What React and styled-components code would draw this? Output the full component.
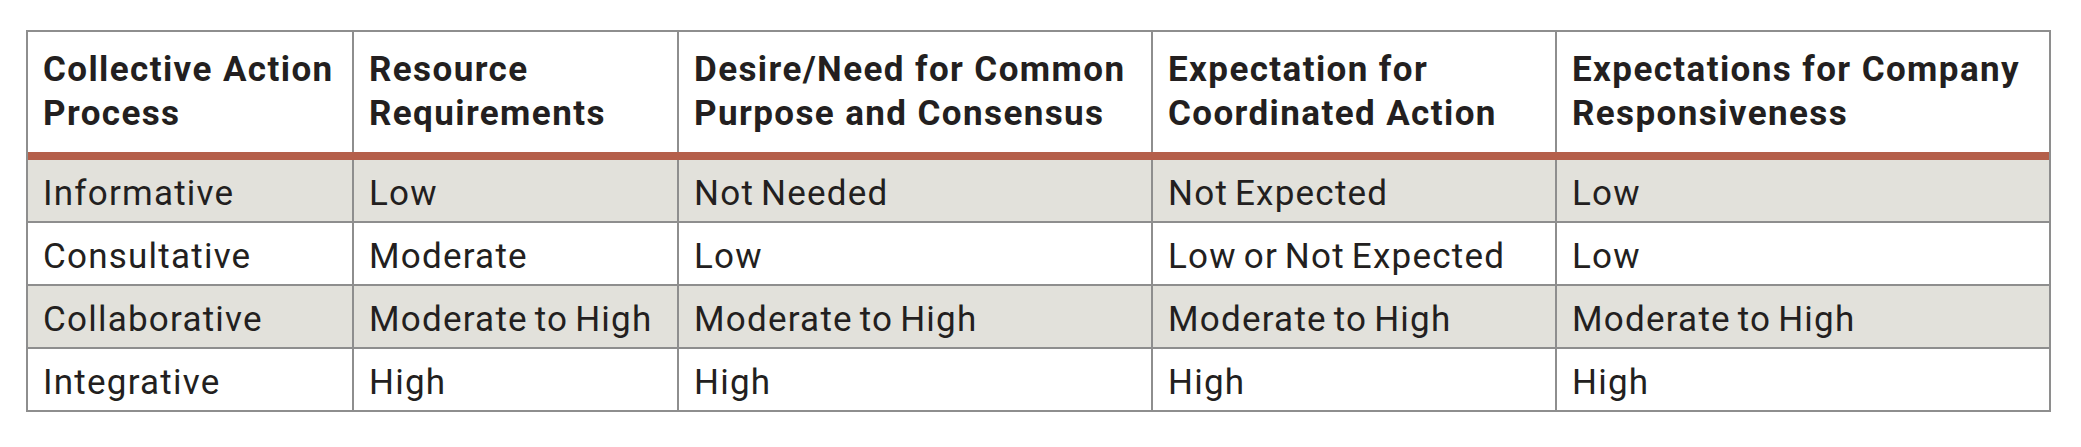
import React from 'react';
import styled, { createGlobalStyle } from 'styled-components';

const GlobalStyle = createGlobalStyle`
  html, body {
    margin: 0;
    padding: 0;
    background: #ffffff;
  }
  body {
    font-family: Roboto, "Liberation Sans", Arial, sans-serif;
    color: #231f20;
  }
`;

const Page = styled.div`
  padding: 30px 0 0 26px;
`;

const Table = styled.div`
  width: 2025px;
  border: 2px solid #8e8e8e;
  box-sizing: border-box;
`;

const Row = styled.div`
  display: grid;
  grid-template-columns: 326px 325px 474px 404px 492px;
  background: ${(p) => (p.$shade ? '#e2e1db' : '#ffffff')};
  border-bottom: ${(p) => (p.$head ? '8px solid #b45f4a' : '2px solid #8e8e8e')};

  &:last-child {
    border-bottom: none;
  }
`;

const Cell = styled.div`
  box-sizing: border-box;
  border-right: 2px solid #8e8e8e;
  padding: ${(p) => (p.$head ? '16px 15px' : '12px 15px 5px')};
  font-size: 35px;
  line-height: 44px;
  letter-spacing: ${(p) => (p.$head ? '0.04em' : '0.035em')};
  word-spacing: ${(p) => (p.$head ? '0' : '-3px')};
  font-weight: ${(p) => (p.$head ? 700 : 400)};
  white-space: nowrap;

  &:last-child {
    border-right: none;
  }
`;

const headers = [
  ['Collective Action', 'Process'],
  ['Resource', 'Requirements'],
  ['Desire/Need for Common', 'Purpose and Consensus'],
  ['Expectation for', 'Coordinated Action'],
  ['Expectations for Company', 'Responsiveness'],
];

const rows = [
  ['Informative', 'Low', 'Not Needed', 'Not Expected', 'Low'],
  ['Consultative', 'Moderate', 'Low', 'Low or Not Expected', 'Low'],
  ['Collaborative', 'Moderate to High', 'Moderate to High', 'Moderate to High', 'Moderate to High'],
  ['Integrative', 'High', 'High', 'High', 'High'],
];

export default function App() {
  return (
    <Page>
      <GlobalStyle />
      <Table>
        <Row $head>
          {headers.map((h) => (
            <Cell $head key={h[0]}>
              {h[0]}
              <br />
              {h[1]}
            </Cell>
          ))}
        </Row>
        {rows.map((r, i) => (
          <Row key={r[0]} $shade={i % 2 === 0}>
            {r.map((c, j) => (
              <Cell key={j}>{c}</Cell>
            ))}
          </Row>
        ))}
      </Table>
    </Page>
  );
}
